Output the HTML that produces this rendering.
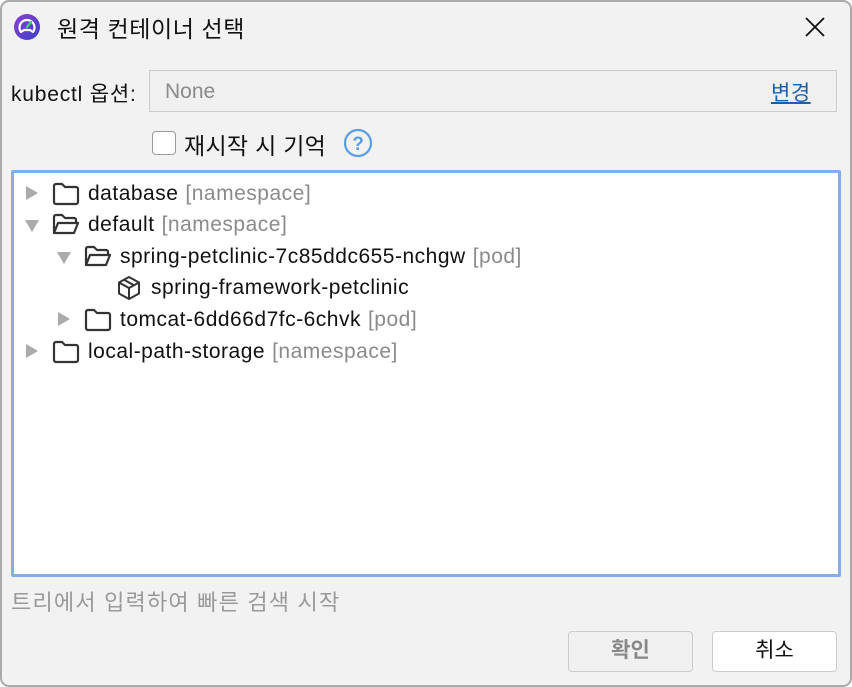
<!DOCTYPE html>
<html><head><meta charset="utf-8"><style>
*{box-sizing:border-box;margin:0;padding:0}
body{width:852px;height:687px;background:#fff;font-family:"Liberation Sans","Noto Sans CJK KR",sans-serif;position:relative;overflow:hidden}
.win{position:absolute;left:0;top:0;width:852px;height:687px;background:#f2f2f2;border:2px solid #aaa;border-radius:9px}
.t{position:absolute;white-space:nowrap}
.row{position:absolute;height:30px;display:flex;align-items:center;font-size:21px;letter-spacing:0.5px;color:#111;white-space:nowrap}
.g{color:#8a8a8a;margin-left:7px}
</style></head><body>
<div class="win"></div>
<svg class="t" style="left:13px;top:13px" width="28" height="28" viewBox="0 0 28 28"><defs><linearGradient id="lg" x1="0" y1="0" x2="1" y2="1"><stop offset="0" stop-color="#8a3fd6"/><stop offset="1" stop-color="#3b3fc8"/></linearGradient></defs><circle cx="14" cy="14" r="13" fill="url(#lg)"/><path d="M8 19 A7.5 7.5 0 1 1 20 19 L17 17 L11 17 Z" fill="none" stroke="#fff" stroke-width="2.2" stroke-linejoin="round"/><path d="M14 14 L18 9" stroke="#3fd07a" stroke-width="2.4" stroke-linecap="round"/></svg>
<div class="t" style="left:57px;top:10px;font-size:23px;letter-spacing:0.6px;color:#111">원격 컨테이너 선택</div>
<svg class="t" style="left:804px;top:16px" width="22" height="22"><path d="M2 2L20 20M20 2L2 20" stroke="#111" stroke-width="1.8"/></svg>
<div class="t" style="left:11px;top:78px;font-size:21px;letter-spacing:0.8px;color:#111">kubectl 옵션:</div>
<div class="t" style="left:149px;top:70px;width:688px;height:42px;border:1px solid #ccc;background:#f0f0f0"></div>
<div class="t" style="left:165px;top:80px;font-size:21px;color:#8a8a8a">None</div>
<div class="t" style="left:771px;top:77px;font-size:21px;letter-spacing:0.5px;color:#1a5fa8;text-decoration:underline">변경</div>
<div class="t" style="left:152px;top:131px;width:24px;height:24px;border:1.5px solid #999;border-radius:4px;background:#fff"></div>
<div class="t" style="left:184px;top:127px;font-size:23px;letter-spacing:0.3px;color:#111">재시작 시 기억</div>
<svg class="t" style="left:343px;top:128px" width="30" height="30"><circle cx="15" cy="15" r="13" fill="none" stroke="#5a9ee8" stroke-width="2.2"/><text x="15" y="22" text-anchor="middle" font-family="Liberation Sans" font-size="19" font-weight="bold" fill="#5a9ee8">?</text></svg>
<div class="t" style="left:11px;top:170px;width:830px;height:407px;border:3px solid #84aee9;background:#fff;border-radius:2px"></div>

<svg class="t" style="left:25px;top:185px" width="14" height="16"><path d="M1 1L13 8L1 15Z" fill="#aaa"/></svg>
<svg class="t" style="left:52px;top:182px" width="28" height="24"><path d="M2 4a2 2 0 0 1 2-2h6l3 3h11a2 2 0 0 1 2 2v13a2 2 0 0 1-2 2H4a2 2 0 0 1-2-2Z" fill="none" stroke="#333" stroke-width="2.2" stroke-linejoin="round"/></svg>
<div class="row" style="left:88px;top:179px">database<span class="g">[namespace]</span></div>

<svg class="t" style="left:24px;top:219px" width="16" height="14"><path d="M1 1L15 1L8 13Z" fill="#aaa"/></svg>
<svg class="t" style="left:52px;top:213px" width="28" height="24"><path d="M2 20V4a2 2 0 0 1 2-2h6l3 3h9a2 2 0 0 1 2 2v3M2 20l4-10h20l-4 10Z" fill="none" stroke="#333" stroke-width="2.2" stroke-linejoin="round"/></svg>
<div class="row" style="left:88px;top:210px">default<span class="g">[namespace]</span></div>

<svg class="t" style="left:56px;top:251px" width="16" height="14"><path d="M1 1L15 1L8 13Z" fill="#aaa"/></svg>
<svg class="t" style="left:84px;top:245px" width="28" height="24"><path d="M2 20V4a2 2 0 0 1 2-2h6l3 3h9a2 2 0 0 1 2 2v3M2 20l4-10h20l-4 10Z" fill="none" stroke="#333" stroke-width="2.2" stroke-linejoin="round"/></svg>
<div class="row" style="left:120px;top:242px">spring-petclinic-7c85ddc655-nchgw<span class="g">[pod]</span></div>

<svg class="t" style="left:116px;top:275px" width="26" height="26"><path d="M13 2L23 7.5V18.5L13 24L3 18.5V7.5Z M3 7.5L13 13L23 7.5 M13 13V24 M8 4.8L18 10.3" fill="none" stroke="#333" stroke-width="2" stroke-linejoin="round"/></svg>
<div class="row" style="left:151px;top:273px">spring-framework-petclinic</div>

<svg class="t" style="left:57px;top:311px" width="14" height="16"><path d="M1 1L13 8L1 15Z" fill="#aaa"/></svg>
<svg class="t" style="left:84px;top:308px" width="28" height="24"><path d="M2 4a2 2 0 0 1 2-2h6l3 3h11a2 2 0 0 1 2 2v13a2 2 0 0 1-2 2H4a2 2 0 0 1-2-2Z" fill="none" stroke="#333" stroke-width="2.2" stroke-linejoin="round"/></svg>
<div class="row" style="left:120px;top:305px">tomcat-6dd66d7fc-6chvk<span class="g">[pod]</span></div>

<svg class="t" style="left:25px;top:343px" width="14" height="16"><path d="M1 1L13 8L1 15Z" fill="#aaa"/></svg>
<svg class="t" style="left:52px;top:340px" width="28" height="24"><path d="M2 4a2 2 0 0 1 2-2h6l3 3h11a2 2 0 0 1 2 2v13a2 2 0 0 1-2 2H4a2 2 0 0 1-2-2Z" fill="none" stroke="#333" stroke-width="2.2" stroke-linejoin="round"/></svg>
<div class="row" style="left:88px;top:337px">local-path-storage<span class="g">[namespace]</span></div>

<div class="t" style="left:11px;top:585px;font-size:22px;letter-spacing:1.2px;color:#999">트리에서 입력하여 빠른 검색 시작</div>
<div class="t" style="left:568px;top:631px;width:125px;height:41px;border:1px solid #ccc;border-radius:4px;background:#f0f0f0;font-size:21px;color:#888;font-weight:bold;text-align:center;line-height:38px">확인</div>
<div class="t" style="left:712px;top:631px;width:125px;height:41px;border:1px solid #ccc;border-radius:4px;background:#fff;font-size:21px;color:#111;text-align:center;line-height:38px">취소</div>
</body></html>
